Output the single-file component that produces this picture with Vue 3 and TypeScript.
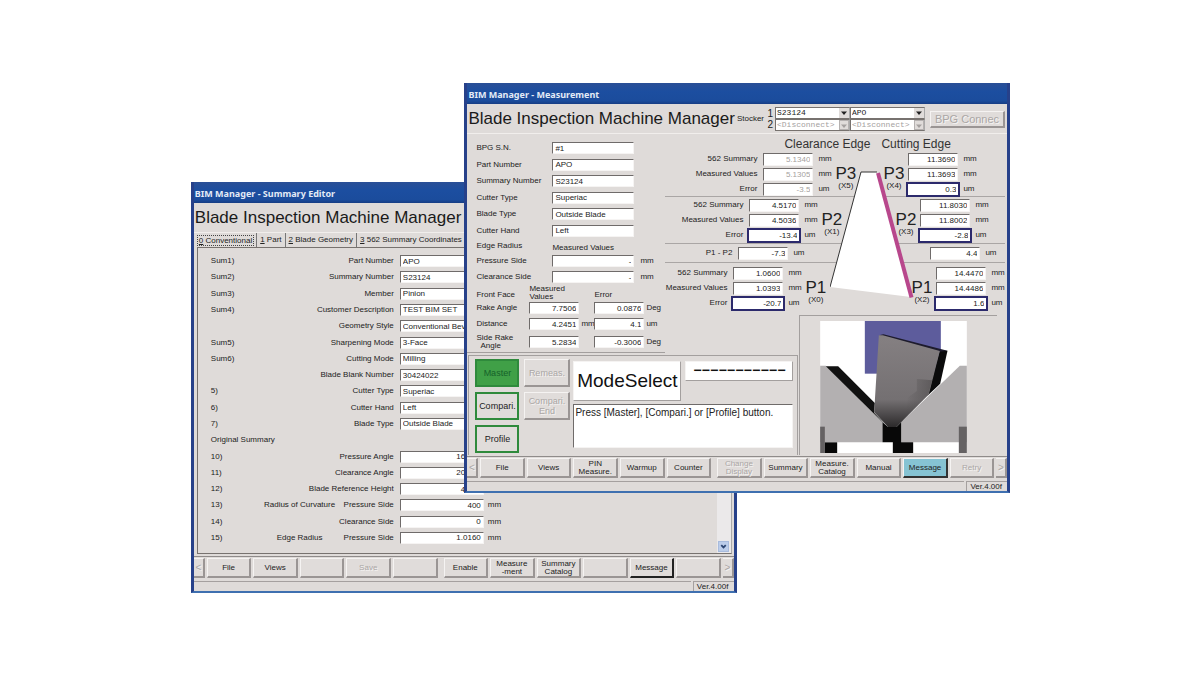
<script setup lang="ts">
interface Reading { label: string; value: string; unit: string; off?: boolean; framed?: boolean }
interface Band {
  id: string
  left: Reading[]
  right: Reading[]
  point?: string
  leftIndex?: string
  rightIndex?: string
}
interface SummaryRow { no: string; prefix?: string; label?: string; value?: string; unit?: string; numeric?: boolean }
interface Tool { text: string; off?: boolean; tone?: string; gap?: boolean }

const summaryRows: SummaryRow[] = [
  { no: 'Sum1)', label: 'Part Number', value: 'APO' },
  { no: 'Sum2)', label: 'Summary Number', value: 'S23124' },
  { no: 'Sum3)', label: 'Member', value: 'Pinion' },
  { no: 'Sum4)', label: 'Customer Description', value: 'TEST BIM SET' },
  { no: '', label: 'Geometry Style', value: 'Conventional Bevel' },
  { no: 'Sum5)', label: 'Sharpening Mode', value: '3-Face' },
  { no: 'Sum6)', label: 'Cutting Mode', value: 'Milling' },
  { no: '', label: 'Blade Blank Number', value: '30424022' },
  { no: '5)', label: 'Cutter Type', value: 'Superiac' },
  { no: '6)', label: 'Cutter Hand', value: 'Left' },
  { no: '7)', label: 'Blade Type', value: 'Outside Blade' },
  { no: 'Original Summary' },
  { no: '10)', label: 'Pressure Angle', value: '16.000', numeric: true },
  { no: '11)', label: 'Clearance Angle', value: '20.000', numeric: true },
  { no: '12)', label: 'Blade Reference Height', value: '4.500', numeric: true },
  { no: '13)', prefix: 'Radius of Curvature', label: 'Pressure Side', value: '400', unit: 'mm', numeric: true },
  { no: '14)', label: 'Clearance Side', value: '0', unit: 'mm', numeric: true },
  { no: '15)', prefix: 'Edge Radius', label: 'Pressure Side', value: '1.0160', unit: 'mm', numeric: true },
]

const summaryTools: Tool[] = [
  { text: 'File' }, { text: 'Views' }, { text: '' }, { text: 'Save', off: true }, { text: '' },
  { text: 'Enable', gap: true }, { text: 'Measure\n-ment' }, { text: 'Summary\nCatalog' }, { text: '' },
  { text: 'Message', tone: 'default' }, { text: '' },
]

const measureTools: Tool[] = [
  { text: 'File' }, { text: 'Views' }, { text: 'PIN\nMeasure.' }, { text: 'Warmup' }, { text: 'Counter' },
  { text: 'Change\nDisplay', off: true, gap: true }, { text: 'Summary' }, { text: 'Measure.\nCatalog' },
  { text: 'Manual' }, { text: 'Message', tone: 'active' }, { text: 'Retry', off: true },
]

const tabs = [
  { key: '0', text: 'Conventional' },
  { key: '1', text: 'Part' },
  { key: '2', text: 'Blade Geometry' },
  { key: '3', text: '562 Summary Coordinates' },
]

const partFields = [
  ['BPG S.N.', '#1'],
  ['Part Number', 'APO'],
  ['Summary Number', 'S23124'],
  ['Cutter Type', 'Superiac'],
  ['Blade Type', 'Outside Blade'],
  ['Cutter Hand', 'Left'],
]

const faceFields = [
  { label: 'Rake Angle', value: '7.7506', unit: '', error: '0.0876', errorUnit: 'Deg' },
  { label: 'Distance', value: '4.2451', unit: 'mm', error: '4.1', errorUnit: 'um' },
  { label: 'Side Rake\n  Angle', value: '5.2834', unit: '', error: '-0.3006', errorUnit: 'Deg' },
]

const triple = (a: string, b: string, c: string, off = false): Reading[] => [
  { label: '562 Summary', value: a, unit: 'mm', off },
  { label: 'Measured Values', value: b, unit: 'mm', off },
  { label: 'Error', value: c, unit: 'um', off, framed: !off },
]

const bands: Band[] = [
  { id: 'p3', point: 'P3', leftIndex: '(X5)', rightIndex: '(X4)', left: triple('5.1340', '5.1305', '-3.5', true), right: triple('11.3690', '11.3693', '0.3') },
  { id: 'p2', point: 'P2', leftIndex: '(X1)', rightIndex: '(X3)', left: triple('4.5170', '4.5036', '-13.4'), right: triple('11.8030', '11.8002', '-2.8') },
  { id: 'diff', left: [{ label: 'P1 - P2', value: '-7.3', unit: 'um' }], right: [{ label: 'P1 - P2', value: '4.4', unit: 'um' }] },
  { id: 'p1', point: 'P1', leftIndex: '(X0)', rightIndex: '(X2)', left: triple('1.0600', '1.0393', '-20.7'), right: triple('14.4470', '14.4486', '1.6') },
]

const stockers = [
  { id: 's1', value: 'S23124', off: false },
  { id: 's2', value: 'APO', off: false },
  { id: 's3', value: '<Disconnect>', off: true },
  { id: 's4', value: '<Disconnect>', off: true },
]
</script>

<template>
  <main class="desktop">
    <section class="window summary">
      <div class="titlebar">BIM Manager - Summary Editor</div>
      <header class="banner"><h1>Blade Inspection Machine Manager</h1></header>
      <nav class="tabs">
        <button v-for="(t, i) in tabs" :key="t.key" class="tab" :class="{ current: i === 0 }"><span><u>{{ t.key }}</u> {{ t.text }}</span></button>
      </nav>
      <div class="sheet">
        <div class="rows">
          <div v-for="(r, i) in summaryRows" :key="i" class="srow">
            <span class="no">{{ r.no }}</span>
            <label v-if="r.label" :for="'sum' + i" class="slabel"><span v-if="r.prefix" class="prefix">{{ r.prefix }}</span>{{ r.label }}</label>
            <input v-if="r.label" :id="'sum' + i" class="box" :class="{ num: r.numeric }" :value="r.value">
            <span class="unit">{{ r.unit }}</span>
          </div>
        </div>
        <div class="scroll">
          <button class="scroll-down" aria-label="Scroll down">
            <svg viewBox="0 0 10 10"><path d="M2.5 3.5 5 6 7.5 3.5" fill="none" stroke="#2d4672" stroke-width="2" /></svg>
          </button>
        </div>
      </div>
      <div class="toolbar">
        <button class="tool nudge off">&lt;</button>
        <button v-for="(t, i) in summaryTools" :key="i" class="tool" :class="[t.tone, { off: t.off, apart: t.gap }]">{{ t.text }}</button>
        <button class="tool nudge off">&gt;</button>
      </div>
      <footer class="status"><span class="track"></span><span class="version">Ver.4.00f</span></footer>
    </section>

    <section class="window measurement">
      <div class="titlebar">BIM Manager - Measurement</div>
      <header class="banner">
        <h1>Blade Inspection Machine Manager</h1>
        <span class="stocker-name">Stocker</span>
        <span class="stocker-no"><span>1</span><span>2</span></span>
        <div class="stockers">
          <div v-for="s in stockers" :key="s.id" class="combo" :class="{ off: s.off }">
            <select :disabled="s.off" aria-label="Stocker"><option>{{ s.value }}</option></select>
            <span class="drop"><svg viewBox="0 0 8 8"><path d="M1 2.500h6L4 6z" fill="currentColor" /></svg></span>
          </div>
        </div>
        <button class="tool connect off">BPG Connec</button>
      </header>

      <div class="body">
        <div class="form">
          <div class="part">
            <div v-for="(f, i) in partFields" :key="i" class="frow">
              <label :for="'part' + i">{{ f[0] }}</label><input :id="'part' + i" class="box" :value="f[1]">
            </div>
          </div>
          <div class="frow head"><span>Edge Radius</span><span class="low">Measured Values</span></div>
          <div class="frow"><label for="er1">Pressure Side</label><input id="er1" class="box num" value="-"><span class="unit">mm</span></div>
          <div class="frow"><label for="er2">Clearance Side</label><input id="er2" class="box num" value="-"><span class="unit">mm</span></div>
          <div class="face facehead"><span class="low">Front Face</span><span class="wide">Measured<br>Values</span><span class="low">Error</span></div>
          <div v-for="(f, i) in faceFields" :key="i" class="face">
            <label :for="'face' + i">{{ f.label }}</label>
            <input :id="'face' + i" class="box num" :value="f.value"><span class="unit">{{ f.unit }}</span>
            <input class="box num" :value="f.error" :aria-label="f.label + ' error'"><span class="unit">{{ f.errorUnit }}</span>
          </div>
        </div>

        <div class="gauge">
          <svg class="wedge" viewBox="0 0 84 130">
            <polygon points="31,2 47,2 81,127 0,117" fill="#fff" />
            <path d="M0 117 31 2H47" fill="none" stroke="#333" stroke-width="1" />
            <path d="M48 3 81.500 127.500" stroke="#b8478c" stroke-width="4" />
          </svg>
          <div class="edges"><h2>Clearance Edge</h2><h2>Cutting Edge</h2></div>
          <div v-for="b in bands" :key="b.id" class="band" :class="b.id">
            <div class="readings left">
              <div v-for="(r, i) in b.left" :key="i" class="reading">
                <label :for="b.id + 'l' + i">{{ r.label }}</label>
                <input :id="b.id + 'l' + i" class="box num" :class="{ framed: r.framed }" :value="r.value" :disabled="r.off">
                <span class="unit">{{ r.unit }}</span>
              </div>
            </div>
            <div v-if="b.point" class="point"><b>{{ b.point }}</b><span>{{ b.leftIndex }}</span></div>
            <div v-if="b.point" class="point second"><b>{{ b.point }}</b><span>{{ b.rightIndex }}</span></div>
            <div class="readings right">
              <div v-for="(r, i) in b.right" :key="i" class="reading">
                <input class="box num" :class="{ framed: r.framed }" :value="r.value" :aria-label="r.label">
                <span class="unit">{{ r.unit }}</span>
              </div>
            </div>
          </div>
        </div>

        <div class="mode">
          <div class="mode-buttons">
            <button class="tool big go on">Master</button>
            <button class="tool big off">Remeas.</button>
            <button class="tool big go">Compari.</button>
            <button class="tool big off">Compari.
End</button>
            <button class="tool big go">Profile</button>
          </div>
          <div class="mode-info">
            <div class="mode-top">
              <output class="mode-name">ModeSelect</output>
              <output class="dashes">−−−−−−−−−−−</output>
            </div>
            <textarea class="message" aria-label="Message" readonly>Press [Master], [Compari.] or [Profile] button.</textarea>
          </div>
        </div>

        <div class="picture">
          <svg viewBox="0 0 440 396">
            <defs>
              <linearGradient id="steel" x1="0" y1="0" x2="0" y2="1">
                <stop offset="0" stop-color="#858082" /><stop offset="0.7" stop-color="#747072" /><stop offset="1" stop-color="#2c2a2b" />
              </linearGradient>
              <linearGradient id="shade" x1="0" y1="0" x2="1" y2="0">
                <stop offset="0" stop-color="#4d4a4b" stop-opacity="0" /><stop offset="1" stop-color="#4d4a4b" stop-opacity=".6" />
              </linearGradient>
            </defs>
            <rect width="440" height="396" fill="#fff" />
            <rect x="134" width="228" height="158" fill="#5d5c9c" />
            <polygon points="0,134 17,134 187,304 187,364 0,364" fill="#b3b0b1" />
            <polygon points="419,134 440,134 440,364 243,364 243,304" fill="#b3b0b1" />
            <polygon points="17,136 54,136 164,246 162,275 200,316 187,304" fill="#111" />
            <polygon points="359,88 382,89 360,188 322,224" fill="#0b0b0c" />
            <polygon points="176,43 190,40 382,89 359,92" fill="#1d1b2c" />
            <polygon points="176,43 188,43 359,90 326,220 229,318 204,318 162,274" fill="url(#steel)" />
            <polygon points="290,174 336,178 324,222 256,290 262,230 290,210" fill="url(#shade)" />
            <path d="M187 304 204 318H229L243 304V364H279V396H218V364H187z" fill="#080808" />
            <rect y="317" width="14" height="79" fill="#656263" />
            <rect x="14" y="364" width="37" height="32" fill="#080808" />
            <rect x="416" y="317" width="24" height="79" fill="#656263" />
          </svg>
        </div>
      </div>

      <div class="toolbar">
        <button class="tool nudge off">&lt;</button>
        <button v-for="(t, i) in measureTools" :key="i" class="tool" :class="[t.tone, { off: t.off, apart: t.gap }]">{{ t.text }}</button>
        <button class="tool nudge off">&gt;</button>
      </div>
      <footer class="status"><span class="track"></span><span class="version">Ver.4.00f</span></footer>
    </section>
  </main>
</template>

<style>
body { margin: 0; background: #fff; }
</style>

<style scoped>
* { box-sizing: border-box; }
.desktop { position: relative; min-height: 100vh; overflow: hidden; background: #fff; }
.window {
  position: absolute;
  width: 45.5%;
  border: solid #27418a;
  border-width: 0 3px 2px;
  border-bottom-color: #3f70b0;
  background: #dfdbd9;
  color: #222;
  font: 8px/10px "Liberation Sans", Arial, sans-serif;
}
.summary { left: 15.9%; top: 182px; }
.measurement { left: 38.7%; top: 83px; }
.titlebar {
  height: 21px;
  padding: 2px 1px 0;
  background: linear-gradient(#2a4f96, #1c4ea0 40%, #1b4c9c 85%, #173d84);
  color: #e4ebf6;
  font: bold 9px/20px "Noto Sans", sans-serif;
}
.banner { display: flex; align-items: center; height: 30px; padding-left: 1px; border-bottom: 1px solid #f1eeec; white-space: nowrap; }
h1 { margin: 0; padding-right: 2px; font: 17px/26px "Liberation Sans", Arial, sans-serif; color: #1a1a1a; }
input, select, textarea, button { margin: 0; border-radius: 0; font: inherit; color: inherit; }
.box {
  width: 82px;
  height: 12px;
  padding: 0 2px;
  border: 1px solid #f6f4f3;
  border-top-color: #6f6b6a;
  border-left-color: #6f6b6a;
  background: #fff;
}
.num { text-align: right; }
.framed { border: 2px solid #2c2a6c; }
.box:disabled { color: #a5a1a0; }

.tool {
  flex: 1 1 0;
  min-width: 0;
  height: 20px;
  padding: 0;
  border: 1px solid #f5f3f2;
  border-right: 2px solid #9a9594;
  border-bottom: 2px solid #9a9594;
  background: #e0dcda;
  line-height: 8px;
  text-align: center;
  white-space: pre-line;
}
.tool.off { color: #aaa6a5; text-shadow: 1px 1px #f5f3f2; }
.tool.apart { margin-left: 4px; }
.tool.nudge { flex: 0 0 11px; border-left: 0; font-size: 10px; }
.tool.default { border-right-color: #222; border-bottom-color: #222; }
.tool.active { background: #86c3d3; border-right-color: #333; border-bottom-color: #333; }
.toolbar { display: flex; gap: 2px; padding: 1px 0 3px; border-top: 1px solid #8f8b8a; }
.status { display: flex; justify-content: flex-end; gap: 2px; height: 10px; }
.track { flex: 1; border-top: 1px solid #a5a09f; }
.version { width: 41px; padding-left: 3px; border: solid #a5a09f; border-width: 1px 0 0 1px; font: 8px/9px "Liberation Sans", sans-serif; }

.tabs { display: flex; height: 14px; padding-left: 3px; }
.tab { padding: 0 3px; border: 0; border-right: 1px solid #777; background: none; line-height: 12px; }
.tab.current { padding: 0 2px 0 0; }
.tab.current span { display: block; padding: 0 1px; border: 1px dotted #444; line-height: 9px; }
.sheet { display: flex; min-height: 307px; margin: 0 2px 2px 3px; border: 1px solid #77726f; border-right-color: #aaa; }
.rows { flex: 1; display: flex; flex-direction: column; padding: 5px 0 7px 13px; }
.srow { flex: 1; display: flex; align-items: center; }
.no { flex: 0 0 52px; white-space: nowrap; }
.slabel { display: flex; justify-content: flex-end; flex: 0 0 132px; padding-right: 1px; white-space: nowrap; }
.prefix { width: 72px; margin-right: 8px; text-align: center; }
.srow .box { width: 84px; margin-left: 5px; }
.srow .unit { padding-left: 4px; }
.scroll { display: flex; align-items: flex-end; width: 14px; padding: 1px; background: #ebe9ea; }
.scroll-down { width: 11px; height: 11px; padding: 0; border: 1px solid #a8bbdd; background: #bccdea; }
.scroll-down svg { display: block; width: 9px; height: 9px; }

.stocker-no { display: flex; flex-direction: column; width: 11px; padding-right: 2px; text-align: right; font-size: 10px; line-height: 11px; }
.stockers { display: grid; grid-template-columns: 75px 75px; }
.combo { display: flex; height: 12px; border: 1px solid #77726f; border-right-color: #aaa; background: #fff; }
.combo select { flex: 1; min-width: 0; padding: 0 1px; border: 0; appearance: none; background: none; opacity: 1; font: 8px/10px "Liberation Mono", monospace; }
.combo.off { color: #a5a1a0; }
.drop { width: 10px; background: #e0dcda; }
.combo.off .drop { border: 1px solid #b5b1b0; }
.drop svg { display: block; width: 8px; height: 8px; margin: 1px auto 0; }
.connect { flex: 0 0 75px; height: 17px; margin: 2px 0 0 5px; font-size: 11px; line-height: 14px; }

.body { display: grid; grid-template-columns: 198px 134px 1fr; grid-template-rows: auto 1fr auto; }
.form { grid-area: 1 / 1 / 3 / 2; padding: 6px 0 0 9px; border-bottom: 1px solid #a39f9e; }
.part { display: flex; flex-direction: column; min-height: 99px; }
.part .frow { flex: 1; }
.frow { display: grid; grid-template-columns: 76px 82px 1fr; align-items: center; height: 16px; white-space: nowrap; }
.frow .unit { padding-left: 6px; }
.frow.head { height: 14px; }
.low { padding-top: 3px; }
.face { display: grid; grid-template-columns: 53px 50px 15px 50px 1fr; align-items: center; height: 16px; white-space: pre; }
.face.facehead { height: 15px; }
.face .box { width: 50px; }
.face .unit { padding-left: 2px; }
.face label { line-height: 8px; }
.face .wide { grid-column: 2 / 4; line-height: 8px; }
.face:last-child { height: 20px; }

.gauge { grid-area: 1 / 2 / 2 / 4; position: relative; padding: 3px 2px 4px 0; }
.wedge { position: absolute; left: 165px; top: 36px; width: 84px; height: 130px; }
.edges { display: flex; gap: 11px; padding-left: 119px; }
h2 { margin: 0; font: 12px/14px "Liberation Sans", sans-serif; white-space: nowrap; color: #333; }
.band { display: flex; align-items: center; padding: 1px 0; border-bottom: 1px solid #aaa6a5; }
.band.p3 { padding-bottom: 0; }
.band.diff { padding: 0; }
.band.p1 { border-bottom: 0; padding-top: 3px; }
.readings { display: flex; flex-direction: column; gap: 1px; }
.reading { display: flex; align-items: center; justify-content: flex-end; height: 14px; white-space: nowrap; }
.diff .reading { height: 18px; }
.reading .box { width: 50px; height: 13px; margin-left: 6px; }
.reading .box.framed { width: 54px; height: 15px; margin: 0 -2px 0 4px; }
.reading .unit { width: 13px; margin-left: 5px; }
.right .reading .box { margin-left: 4px; }
.right .reading .box.framed { margin-left: 2px; }
.p3 .left { width: 166px; }
.p2 .left { width: 152px; }
.diff .left { width: 141px; }
.p1 .left { width: 136px; }
.p3 .right { padding-right: 29px; }
.p2 .right { padding-right: 17px; }
.diff .right { margin-left: auto; padding-right: 7px; }
.p1 .right { padding-right: 1px; }
.point { position: relative; display: flex; flex-direction: column; align-items: center; padding: 8px 0 0 4px; line-height: 9px; }
.point b { font: 17px/15px "Liberation Sans", sans-serif; }
.point.second { margin-left: auto; padding-left: 0; }

.mode { grid-area: 3 / 1 / 4 / 3; display: flex; gap: 3px; margin: 2px 1px 0 1px; padding: 3px 4px 2px 6px; border: solid #a39f9e; border-width: 1px 1px 0 1px; }
.mode-buttons { display: grid; grid-template-columns: 44px 46px; gap: 5px; }
.tool.big { width: 100%; height: 28px; font-size: 9px; line-height: 10px; }
.tool.go { border: 2px solid #2f8a3c; }
.tool.on { background: #40a047; color: #16622a; }
.mode-info { flex: 1; display: flex; flex-direction: column; gap: 3px; padding-top: 2px; }
.mode-top { display: flex; align-items: flex-start; gap: 4px; }
.mode-name, .dashes { background: #fff; border: 1px solid #f5f3f2; border-right-color: #a39f9e; border-bottom-color: #a39f9e; text-align: center; color: #111; }
.mode-name { width: 108px; font: 19px/38px "Liberation Sans", sans-serif; }
.dashes { flex: 1; font: bold 14px/18px "Liberation Mono", monospace; }
.message { display: block; width: 100%; height: 44px; padding: 1px; resize: none; overflow: hidden; border: 1px solid #f5f3f2; border-top-color: #6f6b6a; border-left-color: #6f6b6a; background: #fff; font-size: 10px; line-height: 14px; }

.picture { grid-area: 2 / 3 / 4 / 4; margin-right: 10px; padding: 5px 0 0 20px; border: solid #a39f9e; border-width: 1px 0 0 1px; }
.picture svg { display: block; width: 147px; height: 132px; }
.measurement .toolbar { margin-top: 1px; }
</style>
